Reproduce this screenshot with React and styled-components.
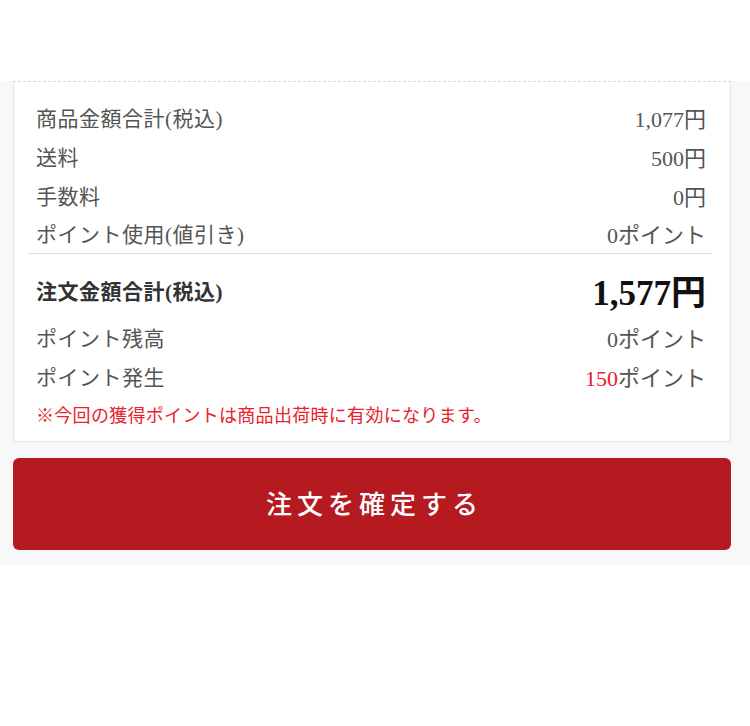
import React from "react";
import styled, { createGlobalStyle } from "styled-components";

const GlobalStyle = createGlobalStyle`
  html, body {
    margin: 0;
    padding: 0;
    background: #ffffff;
  }
  body {
    font-family: "Liberation Serif", "Noto Sans CJK JP", serif;
    -webkit-font-smoothing: antialiased;
  }
`;

const Section = styled.section`
  margin-top: 81px;
  background: #f8f8f8;
  padding: 0 19px 15px 13px;
`;

const Panel = styled.div`
  background: #ffffff;
  border: 1px solid #e6e6e6;
  border-top: 1px dashed #d8d8d8;
  padding: 16px 24px 8px 22px;
`;

const Row = styled.div`
  display: flex;
  justify-content: space-between;
  align-items: center;
  height: ${(p) => p.$height || 38.7}px;
`;

const Label = styled.span`
  font-family: "Liberation Serif", "Noto Sans CJK JP", serif;
  font-size: 21px;
  letter-spacing: 0.5px;
  font-weight: ${(p) => (p.$bold ? 700 : 400)};
  color: ${(p) => (p.$bold ? "#333333" : "#555555")};
`;

const Value = styled.span`
  font-family: "Liberation Serif", "Noto Sans CJK JP", serif;
  font-size: ${(p) => p.$size || 22}px;
  font-weight: ${(p) => (p.$bold ? 700 : 400)};
  color: ${(p) => (p.$bold ? "#111111" : "#555555")};
`;

const Accent = styled.span`
  color: #e8212a;
`;

const Divider = styled.hr`
  border: none;
  border-top: 1px solid #dddddd;
  margin: 0 -6px 0 -8px;
`;

const TotalRow = styled(Row)`
  height: 64px;
  padding-top: 8px;
  box-sizing: border-box;
`;

const Note = styled.p`
  margin: 0;
  height: 38px;
  display: flex;
  align-items: center;
  font-size: 18px;
  letter-spacing: 0.3px;
  color: #e8212a;
  font-family: "Liberation Serif", "Noto Sans CJK JP", serif;
  font-weight: 400;
`;

const ConfirmButton = styled.button`
  display: block;
  width: 100%;
  height: 92px;
  margin-top: 16px;
  padding: 0 0 4px 5px;
  border: none;
  border-radius: 6px;
  background: #b51a21;
  color: #ffffff;
  font-family: "Noto Sans CJK JP", sans-serif;
  font-size: 26px;
  font-weight: 500;
  letter-spacing: 5px;
  cursor: pointer;
`;

const lines = [
  { label: "商品金額合計(税込)", value: "1,077円" },
  { label: "送料", value: "500円" },
  { label: "手数料", value: "0円" },
  { label: "ポイント使用(値引き)", value: "0ポイント" },
];

export default function App() {
  return (
    <>
      <GlobalStyle />
      <Section>
        <Panel>
          {lines.map((l) => (
            <Row key={l.label}>
              <Label>{l.label}</Label>
              <Value>{l.value}</Value>
            </Row>
          ))}
          <Divider />
          <TotalRow>
            <Label $bold>注文金額合計(税込)</Label>
            <Value $bold $size={35}>1,577円</Value>
          </TotalRow>
          <Row>
            <Label>ポイント残高</Label>
            <Value>0ポイント</Value>
          </Row>
          <Row>
            <Label>ポイント発生</Label>
            <Value>
              <Accent>150</Accent>ポイント
            </Value>
          </Row>
          <Note>※今回の獲得ポイントは商品出荷時に有効になります。</Note>
        </Panel>
        <ConfirmButton type="button">注文を確定する</ConfirmButton>
      </Section>
    </>
  );
}
